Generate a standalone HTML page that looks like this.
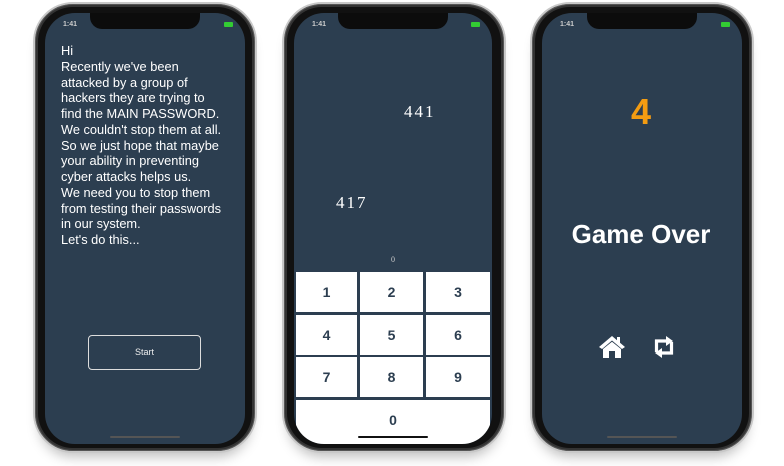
<!DOCTYPE html>
<html><head><meta charset="utf-8"><style>
*{margin:0;padding:0;box-sizing:border-box}
body{width:784px;height:466px;background:#fff;position:relative;overflow:hidden;font-family:"Liberation Sans",sans-serif}
.ph{position:absolute;top:2px;width:224px;height:451px;border-radius:40px;background:#111;border:2px solid #c8c8c8;box-shadow:0 0 0 1px #555 inset,0 0 0 3px #333 inset,0 10px 12px -6px rgba(0,0,0,.25)}
.scr{position:absolute;left:10px;top:9px;width:200px;height:431px;border-radius:30px;background:#2c3e50;overflow:hidden}
.notch{position:absolute;left:50%;margin-left:-55px;top:0;width:110px;height:16px;background:#0c0c0c;border-radius:0 0 12px 12px}
.time{position:absolute;left:18px;top:8px;font-size:7px;color:#ccc;font-weight:bold}
.bat{position:absolute;right:12px;top:9px;width:9px;height:5px;background:#3c3;border-radius:1px}
.home{position:absolute;left:50%;margin-left:-35px;bottom:6px;width:70px;height:2px;border-radius:1px;background:#555}
.txt{position:absolute;left:16px;top:30px;color:#fff;font-size:12.8px;line-height:15.75px;white-space:nowrap}
.start{position:absolute;left:43px;top:322px;width:113px;height:35px;border:1.5px solid #ddd;border-radius:4px;color:#eee;font-size:9px;text-align:center;line-height:32px}
.k{position:absolute;background:#fff;color:#2c3e50;font-weight:bold;font-size:14px;text-align:center;line-height:40px;height:40px}
</style></head><body>

<div class="ph" style="left:33px">
<div class="scr">
<div class="notch"></div><div class="time">1:41</div><div class="bat"></div>
<div class="txt">Hi<br>Recently we've been<br>attacked by a group of<br>hackers they are trying to<br>find the MAIN PASSWORD.<br>We couldn't stop them at all.<br>So we just hope that maybe<br>your ability in preventing<br>cyber attacks helps us.<br>We need you to stop them<br>from testing their passwords<br>in our system.<br>Let's do this...</div>
<div class="start">Start</div>
<div class="home"></div>
</div></div>

<div class="ph" style="left:282px">
<div class="scr" style="left:10px;width:198px">
<div class="time">1:41</div><div class="bat"></div>
<div style="position:absolute;left:110px;top:89px;color:#fff;font-family:'Liberation Serif',serif;font-size:17px;letter-spacing:2px">441</div>
<div style="position:absolute;left:42px;top:180px;color:#fff;font-family:'Liberation Serif',serif;font-size:17px;letter-spacing:2px">417</div>
<div style="position:absolute;left:0;width:198px;top:242px;text-align:center;color:#ccc;font-family:'Liberation Serif',serif;font-size:8px">0</div>
<div class="k" style="left:2px;top:259px;width:61px">1</div>
<div class="k" style="left:66px;top:259px;width:63px">2</div>
<div class="k" style="left:132px;top:259px;width:64px">3</div>
<div class="k" style="left:2px;top:302px;width:61px">4</div>
<div class="k" style="left:66px;top:302px;width:63px">5</div>
<div class="k" style="left:132px;top:302px;width:64px">6</div>
<div class="k" style="left:2px;top:344px;width:61px">7</div>
<div class="k" style="left:66px;top:344px;width:63px">8</div>
<div class="k" style="left:132px;top:344px;width:64px">9</div>
<div class="k" style="left:2px;top:387px;width:194px;height:44px;line-height:40px">0</div>
<div class="notch"></div>
<div class="home" style="background:#111"></div>
</div></div>

<div class="ph" style="left:530px">
<div class="scr">
<div class="notch"></div><div class="time">1:41</div><div class="bat"></div>
<div style="position:absolute;left:0;width:198px;top:78px;text-align:center;color:#f39c12;font-weight:bold;font-size:36px">4</div>
<div style="position:absolute;left:0;width:198px;top:206px;text-align:center;color:#fff;font-weight:bold;font-size:26px">Game Over</div>
<svg style="position:absolute;left:56px;top:322px" width="28" height="24" viewBox="0 0 28 24"><path d="M14 1 L1 12 L4 14 L14 5.5 L24 14 L27 12 L22 7.7 V2 H19 V5.2 Z" fill="#fff"/><path d="M5 14 L14 6.8 L23 14 V23 H17 V16 H11 V23 H5 Z" fill="#fff"/></svg>
<svg style="position:absolute;left:111px;top:322px" width="22" height="24" viewBox="0 0 22 24"><path d="M3.5 17 V6 H14" fill="none" stroke="#fff" stroke-width="3.2"/><path d="M13 1 L20 6 L13 11 Z" fill="#fff"/><path d="M18.5 7 V18 H8" fill="none" stroke="#fff" stroke-width="3.2"/><path d="M9 13 L2 18 L9 23 Z" fill="#fff"/></svg>
<div class="home"></div>
</div></div>

</body></html>
